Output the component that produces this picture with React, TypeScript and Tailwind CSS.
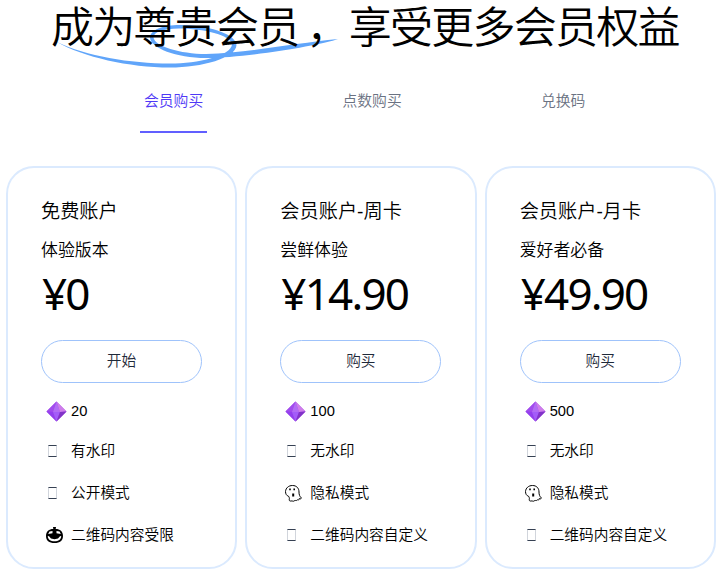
import clsx from "clsx";
import type { ReactNode } from "react";

type IconName = "gem" | "box" | "pumpkin" | "ghost";

interface Feature {
    icon: IconName;
    label: string;
}

interface Plan {
    title: string;
    subtitle: string;
    price: string;
    action: string;
    features: Feature[];
}

const tabs = ["会员购买", "点数购买", "兑换码"];

const plans: Plan[] = [
    {
        title: "免费账户",
        subtitle: "体验版本",
        price: "¥0",
        action: "开始",
        features: [
            { icon: "gem", label: "20" },
            { icon: "box", label: "有水印" },
            { icon: "box", label: "公开模式" },
            { icon: "pumpkin", label: "二维码内容受限" },
        ],
    },
    {
        title: "会员账户-周卡",
        subtitle: "尝鲜体验",
        price: "¥14.90",
        action: "购买",
        features: [
            { icon: "gem", label: "100" },
            { icon: "box", label: "无水印" },
            { icon: "ghost", label: "隐私模式" },
            { icon: "box", label: "二维码内容自定义" },
        ],
    },
    {
        title: "会员账户-月卡",
        subtitle: "爱好者必备",
        price: "¥49.90",
        action: "购买",
        features: [
            { icon: "gem", label: "500" },
            { icon: "box", label: "无水印" },
            { icon: "ghost", label: "隐私模式" },
            { icon: "box", label: "二维码内容自定义" },
        ],
    },
];

const Swoosh = () => (
    <svg
        className="absolute left-0 top-0 h-[74px] w-[345px] fill-[#60a5fa]"
        viewBox="0 0 345 74"
    >
        <path d="M57 42C86 56 130 63.500 170 63.500C198 63.500 231 56 232 44.500C231 35 203 28.500 179 28.500C163 28.500 153.500 32 153.500 37.500C154.500 46 180 54 206 54C247 53 296 43 338 39C322 45 249 57.500 206 58C176 58 150.500 48 150 37.500C150.500 30 162 25 180 25C206 25 235.500 33 236.500 45C236 58 202 67.500 170 67.500C129 67.500 83 57 57 42Z" />
    </svg>
);

const Gem = () => (
    <svg className="h-[21px] w-[21px]" viewBox="0 0 21 21">
        <path fill="#9a45e8" d="M10.500.5 20.500 10.500 10.500 20.500.5 10.500Z" />
        <path fill="#a14bee" d="M10.500.5 7 11 .5 10.500Z" />
        <path fill="#b26cf4" d="M10.500.5 14 11 7 11Z" />
        <path fill="#cf7dea" d="M10.500.5 20.500 10.500 14 11Z" />
        <path fill="#933fee" d="M.5 10.500 7 11 10.500 20.500Z" />
        <path fill="#a45cf8" d="M7 11 14 11 10.500 20.500Z" />
        <path fill="#8233c8" d="M14 11 20.500 10.500 10.500 20.500Z" />
    </svg>
);

const Pumpkin = () => (
    <svg className="h-[17px] w-[17px]" viewBox="0 0 17 17">
        <path d="M7 0h3l-.3 2C14 2 17 4.500 17 9c0 4.500-3 7-8.500 7S0 13.500 0 9C0 4.500 3 2 7.300 2Z" />
        <path
            fill="white"
            d="M2.200 7 3.500 4.500 6.500 4 6.500 6.200ZM14.800 7 13.500 4.500 10.500 4 10.500 6.200ZM1.800 9 3 9.300 5 11.500 8.500 12.200 12 11.500 14 9.300 15.200 9C15.200 12.500 12.500 14.300 8.500 14.300S1.800 12.500 1.800 9Z"
        />
    </svg>
);

const Ghost = () => (
    <svg
        className="h-[17px] w-[17px]"
        viewBox="0 0 17 17"
        fill="none"
        stroke="black"
        strokeWidth="1"
    >
        <path d="M3.800 11.500C1.500 10.500.5 9 .5 6.500.8 3 3.500.5 7.500.5c4 0 6.500 2.700 6.500 6.500 0 2.500.6 4.500 2.500 6-.5 1-1.300 1.100-2.200.5 0 1.300-.8 1.800-1.800 1.300-.9.9-1.700 1-2.500.4-1 1.200-2 1.300-3 .6-1.200.6-2.300.2-3-.7.6-1 .5-2.300-.2-3.600Z" />
        <path
            fill="black"
            stroke="none"
            d="M4.200 3.500h1.600v1.800H4.200ZM8.400 3.500h1.600v1.800H8.400ZM7.200 8.500h2v3H7.200Z"
        />
    </svg>
);

// glyph box shown where the emoji has no font
const Box = () => (
    <span className="block h-3 w-[9px] border border-x-gray-300 border-y-gray-700" />
);

const icons: Record<IconName, ReactNode> = {
    gem: <Gem />,
    box: <Box />,
    pumpkin: <Pumpkin />,
    ghost: <Ghost />,
};

const PlanCard = ({ plan }: { plan: Plan }) => (
    <section className="h-[403px] rounded-[28px] border-2 border-blue-100 px-[33px] pt-8">
        <h3 className="text-[19.2px] leading-6">{plan.title}</h3>
        <p className="mt-[15px] text-[16.9px] leading-6">{plan.subtitle}</p>
        <p className="mt-[5px] pl-px font-['Noto_Sans'] text-[44px] leading-[50px] font-normal tracking-[-1.8px]">
            {plan.price}
        </p>
        <button className="mt-[22px] flex h-[43px] w-[161px] items-center justify-center rounded-full border border-[#9fc3fb] text-[14.7px] text-gray-800">
            {plan.action}
        </button>
        <ul className="mt-[9px] text-[14.7px]">
            {plan.features.map(({ icon, label }, idx) => (
                <li
                    key={idx}
                    className={clsx(
                        "flex items-center",
                        idx === 0 ? "h-[38px]" : "h-[42px]",
                    )}
                >
                    <span
                        className={clsx(
                            "flex w-[30px] shrink-0",
                            icon === "box" ? "pl-[7px]" : "pl-[5px]",
                        )}
                    >
                        {icons[icon]}
                    </span>
                    {label}
                </li>
            ))}
        </ul>
    </section>
);

const App = () => (
    <main className="h-[578px] w-[719px] overflow-hidden bg-white font-['Liberation_Sans','Noto_Sans_CJK_SC',sans-serif] font-[350] text-black">
        <header className="relative h-[74px]">
            <Swoosh />
            <h1 className="relative flex gap-[9px] whitespace-nowrap pl-[51px] pt-px text-[43px] leading-[54px] tracking-[-1.75px]">
                <span>
                    成为尊贵会员<span className="relative left-2">，</span>
                </span>
                <span>享受更多会员权益</span>
            </h1>
        </header>

        <nav className="flex h-[59px] pl-[140px] text-[14.8px]">
            {tabs.map((tab, idx) => (
                <div key={tab} className="w-[198.5px] shrink-0">
                    <button
                        className={clsx(
                            "h-[59px] border-b-2 px-1 pb-[3px]",
                            idx === 0
                                ? "border-indigo-500 text-indigo-600"
                                : "border-transparent text-gray-500",
                        )}
                    >
                        {tab}
                    </button>
                </div>
            ))}
        </nav>

        <div className="mt-[33px] ml-1.5 grid w-[710px] grid-cols-3 gap-2">
            {plans.map((plan) => (
                <PlanCard key={plan.title} plan={plan} />
            ))}
        </div>
    </main>
);

export default App;
